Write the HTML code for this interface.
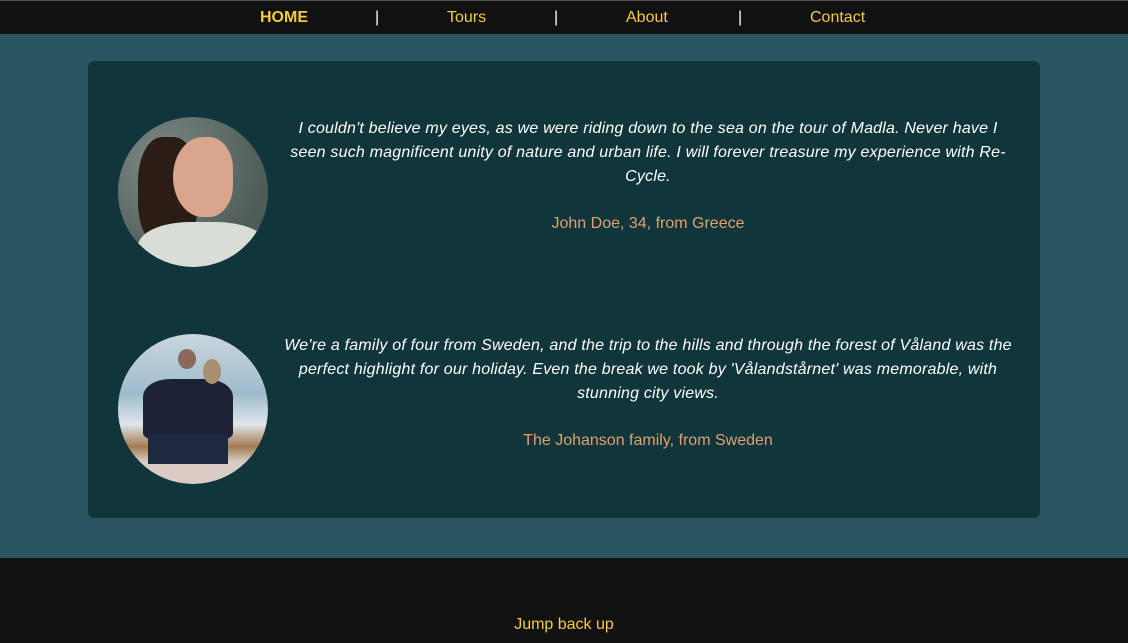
<!DOCTYPE html>
<html><head><meta charset="utf-8"><style>
*{margin:0;padding:0;box-sizing:border-box}
body{width:1128px;height:643px;overflow:hidden;background:#2a555e;font-family:"Liberation Sans",sans-serif}
.nav{position:absolute;top:0;left:0;width:1128px;height:34px;background:#111;border-top:1px solid #555}
.nav span{position:absolute;top:8px;font-size:16px;color:#f5cc3c}
.nav .sep{color:#fff}
.card{position:absolute;left:88px;top:61px;width:952px;height:457px;background:#10353b;border-radius:6px}
.av{position:absolute;left:30px;width:150px;height:150px;border-radius:50%;overflow:hidden}
.q{position:absolute;left:160px;width:800px;text-align:center;color:#fff;font-style:italic;font-size:16px;line-height:24px;white-space:nowrap;letter-spacing:0.2px}
.a{position:absolute;left:190px;width:740px;text-align:center;color:#e0a070;font-size:16px}
.foot{position:absolute;top:558px;left:0;width:1128px;height:85px;background:#111}
.foot span{position:absolute;left:0;width:1128px;text-align:center;top:58px;color:#f5cc3c;font-size:16px}
</style></head><body>
<div class="nav">
<span style="left:260px;font-weight:bold">HOME</span>
<span class="sep" style="left:375px">|</span>
<span style="left:447px">Tours</span>
<span class="sep" style="left:554px">|</span>
<span style="left:626px">About</span>
<span class="sep" style="left:738px">|</span>
<span style="left:810px">Contact</span>
</div>
<div class="card">
<div class="av" style="top:56px;background:radial-gradient(circle at 30% 30%,#7d8a86,#4e5c58 70%)">
<div style="position:absolute;left:20px;top:20px;width:60px;height:110px;background:#2a1d16;border-radius:40%"></div>
<div style="position:absolute;left:55px;top:20px;width:60px;height:80px;background:#d9a58c;border-radius:50% 40% 40% 50%"></div>
<div style="position:absolute;left:20px;top:105px;width:130px;height:60px;background:#d8ddd6;border-radius:40% 40% 0 0"></div>
</div>
<div class="q" style="top:56px">I couldn't believe my eyes, as we were riding down to the sea on the tour of Madla. Never have I<br>seen such magnificent unity of nature and urban life. I will forever treasure my experience with Re-<br>Cycle.</div>
<div class="a" style="top:154px">John Doe, 34, from Greece</div>
<div class="av" style="top:273px;background:linear-gradient(#c9d6de 0%,#9fbccb 40%,#dfe6ea 60%,#a57b52 75%,#d8ccc4 85%)">
<div style="position:absolute;left:25px;top:45px;width:90px;height:60px;background:#1b2236;border-radius:30% 30% 10% 10%"></div>
<div style="position:absolute;left:60px;top:15px;width:18px;height:20px;background:#8a6a5a;border-radius:50%"></div>
<div style="position:absolute;left:85px;top:25px;width:18px;height:25px;background:#a89070;border-radius:50%"></div>
<div style="position:absolute;left:30px;top:100px;width:80px;height:30px;background:#1d2a40"></div>
</div>
<div class="q" style="top:273px">We're a family of four from Sweden, and the trip to the hills and through the forest of Våland was the<br>perfect highlight for our holiday. Even the break we took by 'Vålandstårnet' was memorable, with<br>stunning city views.</div>
<div class="a" style="top:371px">The Johanson family, from Sweden</div>
</div>
<div class="foot"><span>Jump back up</span></div>
</body></html>
